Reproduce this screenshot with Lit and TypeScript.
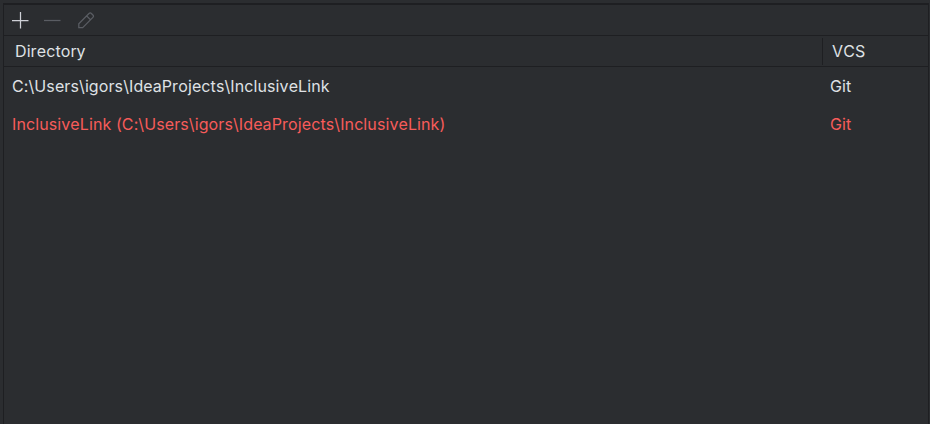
import { LitElement, html, css } from "lit";
import { customElement } from "lit/decorators.js";
import { classMap } from "lit/directives/class-map.js";

interface Mapping {
  directory: string;
  vcs: string;
  invalid: boolean;
}

const mappings: Mapping[] = [
  { directory: "C:\\Users\\igors\\IdeaProjects\\InclusiveLink", vcs: "Git", invalid: false },
  { directory: "InclusiveLink (C:\\Users\\igors\\IdeaProjects\\InclusiveLink)", vcs: "Git", invalid: true },
];

@customElement("app-root")
export class AppRoot extends LitElement {
  static styles = css`
    :host {
      display: block;
      box-sizing: border-box;
      height: 424px;
      padding: 3px 1px 0 3px;
      background: #2b2d30;
      color: #dfe1e5;
      font: 16px/20px Inter, "Liberation Sans", sans-serif;
      font-kerning: none;
      letter-spacing: 0.1px;
      overflow: hidden;
    }
    .panel {
      box-sizing: border-box;
      height: 421px;
      border: 1px solid #1e1f22;
      border-top-width: 2px;
      border-bottom: 0;
    }
    .toolbar {
      display: flex;
      align-items: center;
      gap: 12px;
      height: 30px;
      padding-left: 6px;
      border-bottom: 1px solid #1e1f22;
    }
    .icon {
      display: block;
      width: 20px;
      height: 20px;
      fill: none;
      stroke: #ced0d6;
      stroke-width: 1.25;
    }
    .off { stroke: #5a5d63; }
    .pencil { margin-left: 2px; }
    .row {
      display: grid;
      grid-template-columns: 818px 1fr;
      align-items: center;
      height: 38px;
      white-space: pre;
    }
    .row > span { padding-left: 8px; }
    .head {
      height: 30px;
      border-bottom: 1px solid #1e1f22;
    }
    .head > span {
      box-sizing: border-box;
      height: 27px;
      padding: 3px 0 0 11px;
    }
    .head > .vcs {
      border-left: 1px solid #1e1f22;
      padding-left: 9px;
    }
    .invalid { color: #f75c5a; }
  `;

  render() {
    return html`
      <div class="panel">
        <div class="toolbar">
          <svg class="icon" viewBox="0 0 20 20"><path d="M2 10.5H18.5M10.5 2V18.5" /></svg>
          <svg class="icon off" viewBox="0 0 20 20"><path d="M2 10.5H18.5" /></svg>
          <svg class="icon off pencil" viewBox="0 0 20 20">
            <path d="M2.8 17.6V13.7L13 3.5Q14.2 2.3 15.4 3.5L16.9 5Q18.1 6.2 16.9 7.4L6.7 17.6ZM10.6 5.9L14.5 9.8" />
          </svg>
        </div>
        <div class="row head"><span>Directory</span><span class="vcs">VCS</span></div>
        ${mappings.map(
          (m) => html`<div class=${classMap({ row: true, invalid: m.invalid })}>
            <span>${m.directory}</span><span>${m.vcs}</span>
          </div>`
        )}
      </div>
    `;
  }
}
